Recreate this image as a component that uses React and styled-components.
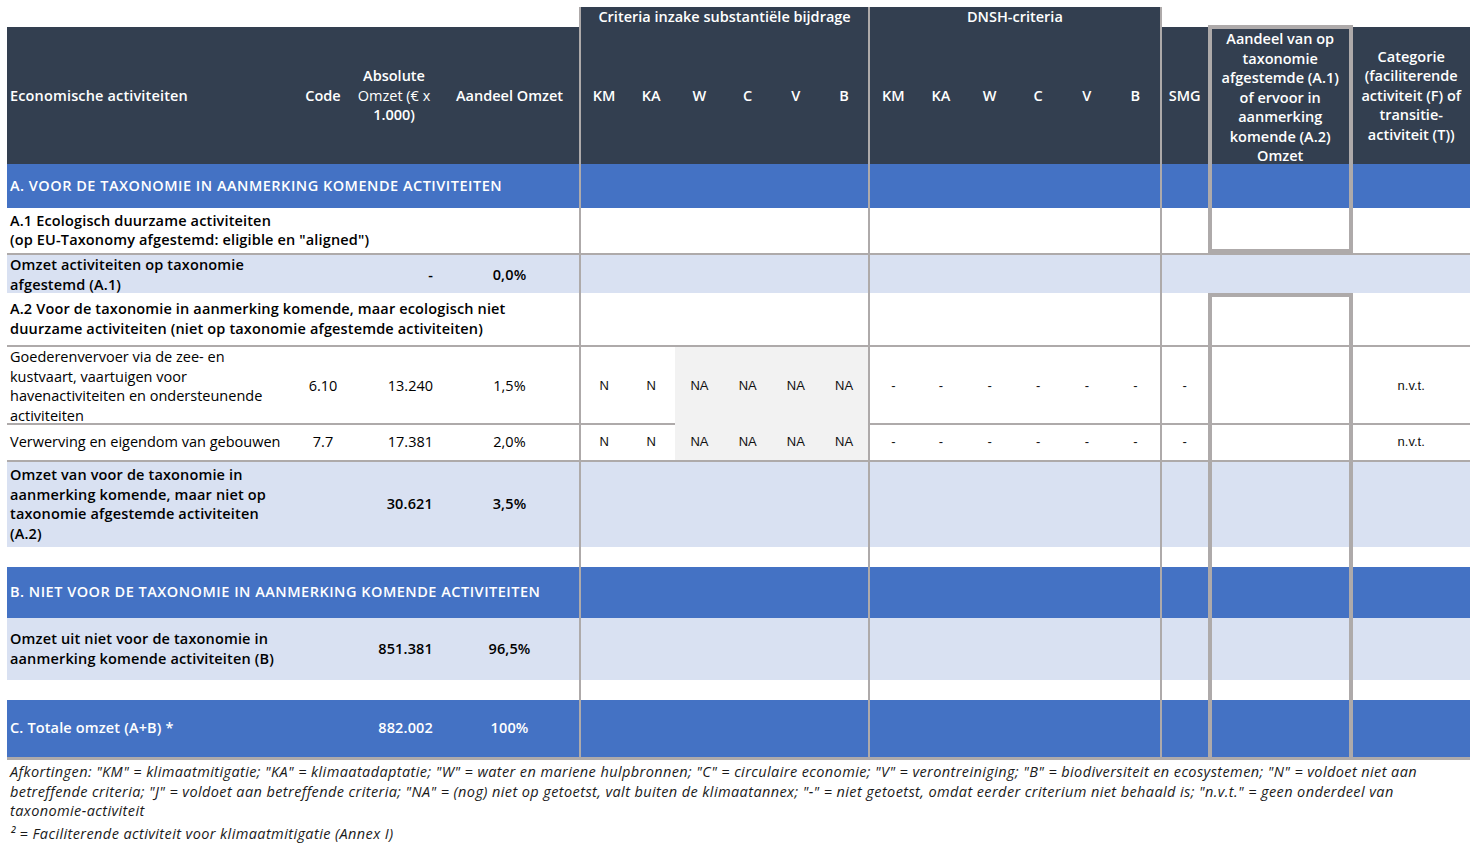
import styled, { createGlobalStyle } from "styled-components";

// kolommen: activiteit, code, absolute omzet, aandeel, 6x criteria, 6x DNSH, SMG, aandeel-kader, categorie
const COLS =
  "291px 50px 92px 139px repeat(6, 48.2px) repeat(6, 48.6px) 48px 145px 117px";
const LINE = "#aeaaaa";

const GlobalStyle = createGlobalStyle`
  *, *::before, *::after { box-sizing: border-box; }
  body {
    margin: 0;
    background: #fff;
    color: #000;
    font-family: "Open Sans", "Liberation Sans", sans-serif;
  }
`;

const Page = styled.div`
  padding: 7px 0 0 7px;
`;

const Sheet = styled.div`
  width: 1463px;
  display: flex;
  flex-direction: column;
  border-bottom: 3px solid ${LINE};
`;

const tones = {
  band: "transparent",
  head: "#333f50",
  section: "#4472c4",
  sub: "#d9e1f2",
  plain: "#fff",
};

const Row = styled.div`
  display: grid;
  grid-template-columns: ${COLS};
  height: ${(p) => p.$h}px;
  background: ${(p) => tones[p.$tone]};
  color: ${(p) => (p.$tone === "head" || p.$tone === "section" ? "#fff" : "#000")};
  border-bottom: ${(p) => (p.$line ? `2px solid ${LINE}` : "none")};
  font-size: 14.5px;
  line-height: 19.5px;
`;

const Cell = styled.div`
  grid-column: span ${(p) => p.$span || 1};
  display: flex;
  align-items: center;
  justify-content: ${(p) =>
    p.$align === "right" ? "flex-end" : p.$align === "center" ? "center" : "flex-start"};
  text-align: ${(p) => p.$align || "left"};
  padding: ${(p) => (p.$align === "right" ? "0 7px 1px 3px" : "0 3px 1px")};
  font-weight: ${(p) => (p.$bold ? 600 : 400)};
  letter-spacing: ${(p) => (p.$caps ? "0.5px" : p.$bold ? "0.15px" : "0")};
  white-space: nowrap;
  background: ${(p) => (p.$shade ? "#f2f2f2" : "transparent")};
  border-left: ${(p) => (p.$sep ? `2px solid ${LINE}` : "none")};
`;

const Lines = styled.span`
  display: block;
`;

const Mark = styled(Cell)`
  justify-content: center;
  font-family: "Liberation Sans", Arial, sans-serif;
  font-size: 13px;
  letter-spacing: 0;
  color: #111;
`;

const GroupTitle = styled(Cell)`
  justify-content: center;
  background: #333f50;
  color: #fff;
  font-weight: 600;
  padding-bottom: 2px;
`;

const HeadLabel = styled(Cell)`
  justify-content: center;
  text-align: center;
  font-weight: 600;
  padding-bottom: 2px;
`;

const Light = styled.span`
  font-weight: 400;
`;

const BoxCell = styled.div`
  border-left: ${(p) => (p.$open ? `4px solid ${LINE}` : "none")};
  border-right: ${(p) => (p.$open ? `4px solid ${LINE}` : "none")};
  border-top: ${(p) => (p.$top ? `4px solid ${LINE}` : "none")};
  border-bottom: ${(p) => (p.$bottom ? `4px solid ${LINE}` : "none")};
  margin-top: ${(p) => (p.$lift ? "-2px" : "0")};
  display: flex;
  align-items: center;
  justify-content: center;
  text-align: center;
  font-weight: 600;
  white-space: nowrap;
`;

const Notes = styled.div`
  padding: 2px 0 0 3px;
  font-style: italic;
  font-size: 14.5px;
  letter-spacing: 0.4px;
  line-height: 19.5px;
  color: #1a1a1a;
  white-space: nowrap;
`;

const NoteLine = styled.p`
  margin: ${(p) => (p.$gap ? "3px 0 0" : "0")};
`;

const CRIT = ["KM", "KA", "W", "C", "V", "B"];
const EMPTY = ["", "", "", "", "", ""];

// rechterdeel van een rij: criteria, DNSH, SMG, kader en categorie
const Tail = ({ crit = EMPTY, dnsh = EMPTY, smg = "", cat = "", shade, box = "open" }) => (
  <>
    {crit.map((v, i) => (
      <Mark key={"c" + i} $sep={i === 0} $shade={shade && i >= 2}>
        {v}
      </Mark>
    ))}
    {dnsh.map((v, i) => (
      <Mark key={"d" + i} $sep={i === 0}>
        {v}
      </Mark>
    ))}
    <Mark $sep>{smg}</Mark>
    <BoxCell $open={box !== "none"} $top={box === "top"} $bottom={box === "bottom"} />
    <Mark>{cat}</Mark>
  </>
);

const App = () => {
  const dash = ["-", "-", "-", "-", "-", "-"];
  const marks = ["N", "N", "NA", "NA", "NA", "NA"];

  return (
    <Page>
      <GlobalStyle />
      <Sheet>
        <Row $tone="band" $h={20}>
          <Cell $span={4} />
          <GroupTitle $span={6} $sep>
            Criteria inzake substantiële bijdrage
          </GroupTitle>
          <GroupTitle $span={6} $sep>
            DNSH-criteria
          </GroupTitle>
          <Cell $sep />
          <Cell />
          <Cell />
        </Row>

        <Row $tone="head" $h={137}>
          <Cell $bold>Economische activiteiten</Cell>
          <HeadLabel>Code</HeadLabel>
          <HeadLabel>
            <Lines>
              Absolute
              <br />
              <Light>Omzet (€ x</Light>
              <br />
              1.000)
            </Lines>
          </HeadLabel>
          <HeadLabel>Aandeel Omzet</HeadLabel>
          {CRIT.map((c, i) => (
            <HeadLabel key={"hc" + c} $sep={i === 0}>
              {c}
            </HeadLabel>
          ))}
          {CRIT.map((c, i) => (
            <HeadLabel key={"hd" + c} $sep={i === 0}>
              {c}
            </HeadLabel>
          ))}
          <HeadLabel $sep>SMG</HeadLabel>
          <BoxCell $open $top $lift>
            <Lines>
              Aandeel van op
              <br />
              taxonomie
              <br />
              afgestemde (A.1)
              <br />
              of ervoor in
              <br />
              aanmerking
              <br />
              komende (A.2)
              <br />
              Omzet
            </Lines>
          </BoxCell>
          <HeadLabel>
            <Lines>
              Categorie
              <br />
              (faciliterende
              <br />
              activiteit (F) of
              <br />
              transitie-
              <br />
              activiteit (T))
            </Lines>
          </HeadLabel>
        </Row>

        <Row $tone="section" $h={44}>
          <Cell $span={4} $bold $caps>
            A. VOOR DE TAXONOMIE IN AANMERKING KOMENDE ACTIVITEITEN
          </Cell>
          <Tail />
        </Row>

        <Row $tone="plain" $h={47} $line>
          <Cell $span={4} $bold>
            <Lines>
              A.1 Ecologisch duurzame activiteiten
              <br />
              (op EU-Taxonomy afgestemd: eligible en "aligned")
            </Lines>
          </Cell>
          <Tail box="bottom" />
        </Row>

        <Row $tone="sub" $h={38}>
          <Cell $bold>
            <Lines>
              Omzet activiteiten op taxonomie
              <br />
              afgestemd (A.1)
            </Lines>
          </Cell>
          <Cell />
          <Cell $align="right" $bold>
            -
          </Cell>
          <Cell $align="center" $bold>
            0,0%
          </Cell>
          <Tail box="none" />
        </Row>

        <Row $tone="plain" $h={54} $line>
          <Cell $span={4} $bold>
            <Lines>
              A.2 Voor de taxonomie in aanmerking komende, maar ecologisch niet
              <br />
              duurzame activiteiten (niet op taxonomie afgestemde activiteiten)
            </Lines>
          </Cell>
          <Tail box="top" />
        </Row>

        <Row $tone="plain" $h={78} $line>
          <Cell>
            <Lines>
              Goederenvervoer via de zee- en
              <br />
              kustvaart, vaartuigen voor
              <br />
              havenactiviteiten en ondersteunende
              <br />
              activiteiten
            </Lines>
          </Cell>
          <Cell $align="center">6.10</Cell>
          <Cell $align="right">13.240</Cell>
          <Cell $align="center">1,5%</Cell>
          <Tail crit={marks} dnsh={dash} smg="-" cat="n.v.t." shade />
        </Row>

        <Row $tone="plain" $h={37} $line>
          <Cell>Verwerving en eigendom van gebouwen</Cell>
          <Cell $align="center">7.7</Cell>
          <Cell $align="right">17.381</Cell>
          <Cell $align="center">2,0%</Cell>
          <Tail crit={marks} dnsh={dash} smg="-" cat="n.v.t." shade />
        </Row>

        <Row $tone="sub" $h={85}>
          <Cell $bold>
            <Lines>
              Omzet van voor de taxonomie in
              <br />
              aanmerking komende, maar niet op
              <br />
              taxonomie afgestemde activiteiten
              <br />
              (A.2)
            </Lines>
          </Cell>
          <Cell />
          <Cell $align="right" $bold>
            30.621
          </Cell>
          <Cell $align="center" $bold>
            3,5%
          </Cell>
          <Tail />
        </Row>

        <Row $tone="plain" $h={20}>
          <Cell $span={4} />
          <Tail />
        </Row>

        <Row $tone="section" $h={51}>
          <Cell $span={4} $bold $caps>
            B. NIET VOOR DE TAXONOMIE IN AANMERKING KOMENDE ACTIVITEITEN
          </Cell>
          <Tail />
        </Row>

        <Row $tone="sub" $h={62}>
          <Cell $bold>
            <Lines>
              Omzet uit niet voor de taxonomie in
              <br />
              aanmerking komende activiteiten (B)
            </Lines>
          </Cell>
          <Cell />
          <Cell $align="right" $bold>
            851.381
          </Cell>
          <Cell $align="center" $bold>
            96,5%
          </Cell>
          <Tail />
        </Row>

        <Row $tone="plain" $h={20}>
          <Cell $span={4} />
          <Tail />
        </Row>

        <Row $tone="section" $h={57}>
          <Cell $bold>C. Totale omzet (A+B) *</Cell>
          <Cell />
          <Cell $align="right" $bold>
            882.002
          </Cell>
          <Cell $align="center" $bold>
            100%
          </Cell>
          <Tail />
        </Row>
      </Sheet>

      <Notes>
        <NoteLine>
          Afkortingen: "KM" = klimaatmitigatie; "KA" = klimaatadaptatie; "W" = water en mariene
          hulpbronnen; "C" = circulaire economie; "V" = verontreiniging; "B" = biodiversiteit en
          ecosystemen; "N" = voldoet niet aan
        </NoteLine>
        <NoteLine>
          betreffende criteria; "J" = voldoet aan betreffende criteria; "NA" = (nog) niet op
          getoetst, valt buiten de klimaatannex; "-" = niet getoetst, omdat eerder criterium niet
          behaald is; "n.v.t." = geen onderdeel van
        </NoteLine>
        <NoteLine>taxonomie-activiteit</NoteLine>
        <NoteLine $gap>² = Faciliterende activiteit voor klimaatmitigatie (Annex I)</NoteLine>
      </Notes>
    </Page>
  );
};

export default App;
